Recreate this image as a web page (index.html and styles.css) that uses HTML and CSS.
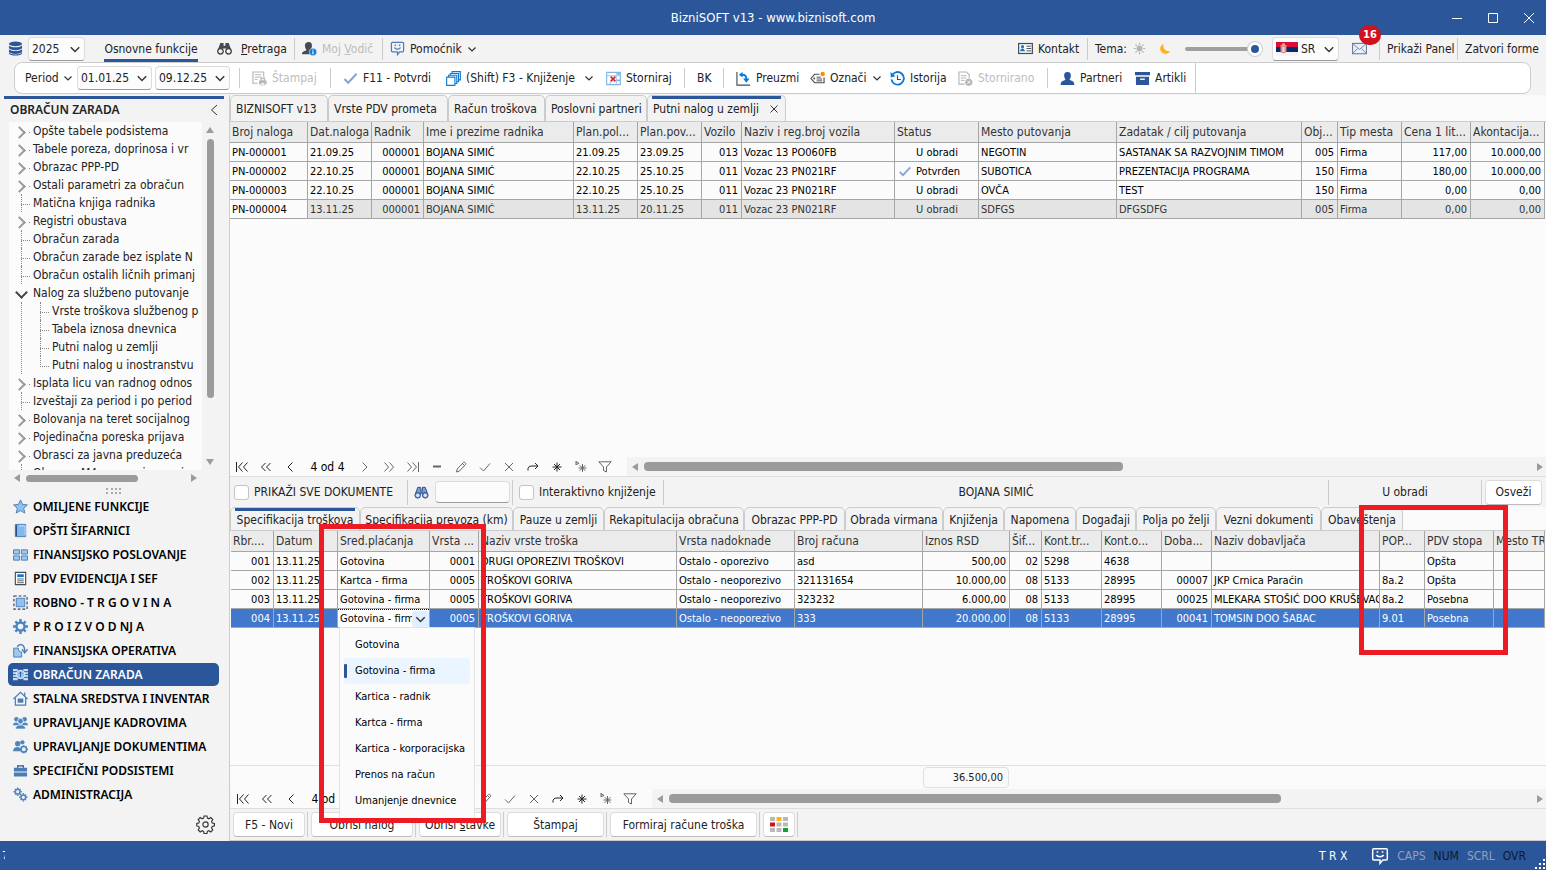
FILE: index.html
```html
<!DOCTYPE html>
<html lang="sr-Latn">
<head>
    <meta charset="UTF-8">
    <meta name="viewport" content="width=device-width, initial-scale=1.0">
    <title>BizniSOFT v13 - www.biznisoft.com</title>
    <link rel="stylesheet" href="styles.css">
</head>
<body>
    <!-- shared icons -->
    <svg class="icon-defs" aria-hidden="true">
        <symbol id="i-down" viewBox="0 0 10 10"><path d="M1.500 3.500L5 7l3.500-3.500" fill="none" stroke="#333" stroke-width="1.200"/></symbol>
        <symbol id="i-db" viewBox="0 0 16 16"><g fill="#2b579a"><ellipse cx="8" cy="3" rx="7" ry="2.500"/><path d="M1 4.500c1 3 13 3 14 0v3c-1 3-13 3-14 0z"/><path d="M1 8.500c1 3 13 3 14 0v3c-1 3-13 3-14 0z"/><path d="M1 12.300c1 2.700 13 2.700 14 0v1c-1 3-13 3-14 0z"/></g></symbol>
        <symbol id="i-binoc" viewBox="0 0 16 16"><g fill="#444b52"><path d="M3.500 2H7v3h2V2h3.500l1 3 2 5h-5.700V8H6.200v2H.5l2-5z"/><circle cx="3.700" cy="11" r="3.600"/><circle cx="12.300" cy="11" r="3.600"/></g><g fill="#f3f3f3"><circle cx="3.700" cy="11" r="2.100"/><circle cx="12.300" cy="11" r="2.100"/></g></symbol>
        <symbol id="i-binoc2" viewBox="0 0 16 16"><g fill="#7d9cd0" stroke="#2a4c86"><path d="M4 2.500h3l.5 4v3h-6zM9 2.500h3l2.500 7h-6v-3z"/><circle cx="4" cy="11" r="3"/><circle cx="12" cy="11" r="3"/></g><circle cx="4" cy="11" r="1.700" fill="#dbe7fa"/><circle cx="12" cy="11" r="1.700" fill="#dbe7fa"/></symbol>
        <symbol id="i-guide" viewBox="0 0 16 16"><path d="M7 1c3 0 4 2 3.500 5-.5 2-1 2.500-1 3.500L11 11v3H0c0-3 2-3 4.500-4V9C3 7.500 3 5 3.300 3.500 3.600 2 5 1 7 1z" fill="#444b52"/><circle cx="11.700" cy="11.700" r="4" fill="#0b7bd6" stroke="#f3f3f3" stroke-width=".6"/><path d="M11.700 11v3M11.700 9v1.200" stroke="#fff" stroke-width="1.300"/></symbol>
        <symbol id="i-smile" viewBox="0 0 16 16"><path d="M2.500 1.500h11q1 0 1 1v8q0 1-1 1h-3L8 14.500v-3H2.500q-1 0-1-1v-8q0-1 1-1z" fill="none" stroke="currentColor" stroke-width="1.300"/><path d="M5 4.500h1.500M9.500 4.500H11M4.800 7c1 2.300 5.400 2.300 6.400 0" fill="none" stroke="currentColor" stroke-width="1.400"/></symbol>
        <symbol id="i-contact" viewBox="0 0 16 16"><rect x=".7" y="2.700" width="14.600" height="10.600" fill="#fff" stroke="#444b52" stroke-width="1.300"/><circle cx="4.800" cy="6" r="1.700" fill="#0b7bd6"/><path d="M2.300 11c0-4 5-4 5 0z" fill="#0b7bd6"/><path d="M9 5.500h5M9 8h5M9 10.500h5" stroke="#444b52"/></symbol>
        <symbol id="i-sun" viewBox="0 0 16 16"><circle cx="8" cy="8" r="3.600" fill="#b4b4b4"/><path d="M8 1v2.500M8 12.500V15M1 8h2.500M12.500 8H15M3 3l1.800 1.800M11.200 11.200L13 13M13 3l-1.800 1.800M4.800 11.200L3 13" stroke="#b4b4b4" stroke-width="1.500"/></symbol>
        <symbol id="i-moon" viewBox="0 0 16 16"><path d="M7 2a6.500 6.500 0 1 0 8 9c-5 1.500-10-3-8-9z" fill="#ffb115"/></symbol>
        <symbol id="i-flag" viewBox="0 0 22 14"><path d="M0 0h22v5H0z" fill="#dc0c3c"/><path d="M0 5h22v5H0z" fill="#0c2a66"/><path d="M0 10h22v4H0z" fill="#f4f4f4"/><path d="M4.500 3h6v6c0 3-6 3-6 0z" fill="#d9888f"/><path d="M6 1.500h3V4H6z" fill="#e6b25a"/><path d="M6.500 5h2v5h-2z" fill="#f0d9d9"/></symbol>
        <symbol id="i-mail" viewBox="0 0 16 16"><rect x=".6" y="2.600" width="14.800" height="11" fill="#eaf0fa" stroke="#71829e" stroke-width="1.200"/><path d="M1 3l7 6 7-6M1 13l5-5M15 13l-5-5" fill="none" stroke="#71829e"/></symbol>
        <symbol id="i-print" viewBox="0 0 16 16"><path d="M12.500 6V1H1v12h5" fill="none" stroke="#b5b5b5" stroke-width="1.200"/><path d="M3 4h7M3 6.500h7M3 9h3" stroke="#b5b5b5"/><path d="M9 7h5v3h1.500v4H7.500v-4H9z" fill="#b5b5b5"/><path d="M10 8h3v2h-3zM9.500 12.500h4V15h-4z" fill="#fff" stroke="#b5b5b5" stroke-width=".7"/></symbol>
        <symbol id="i-check" viewBox="0 0 16 16"><path d="M1.500 8.500l4 4L14.500 3" fill="none" stroke="#86a3d6" stroke-width="2.200"/></symbol>
        <symbol id="i-stack" viewBox="0 0 16 16"><g fill="#fff" stroke="#0b7bd6" stroke-width="1.200"><path d="M6.500 .7h8.800v8.800H6.500z"/><path d="M4.600 2.600h8.800v8.800H4.600z"/><path d="M2.700 4.500h8.800v8.800H2.700z"/><path d="M.7 6.500h8.800v8.800H.7z"/></g></symbol>
        <symbol id="i-storno" viewBox="0 0 16 16"><path d="M.7 1.500h14.600v13H.7z" fill="#fff" stroke="#7db8e8" stroke-width="1.200"/><path d="M11 1h4.500v3H11zM11 9h4v2h-4z" fill="#7db8e8"/><path d="M1 5h14M4.500 11.500V15M11 5v10" stroke="#7db8e8" stroke-width=".8"/><path d="M5 6l5 5M10 6l-5 5" stroke="#dc2036" stroke-width="1.800"/></symbol>
        <symbol id="i-fetch" viewBox="0 0 16 16"><path d="M1 1v14h14" fill="none" stroke="#444b52" stroke-width="1.200"/><path d="M3 4l4-3v2c3 0 5 2 5 5h2.500L11 12.500 7.500 8H10c0-2-1-3-3-3v2z" fill="#0b7bd6"/></symbol>
        <symbol id="i-mark" viewBox="0 0 16 16"><path d="M10 3.500H5L1 8l4 4.500h10V7" fill="none" stroke="#444b52" stroke-width="1.200"/><circle cx="4.500" cy="8" r="1" fill="#444b52"/><path d="M7 6.500h4.500M7 8.500h6M7 10.500h6" stroke="#444b52"/><circle cx="13.500" cy="3.300" r="2.400" fill="#ff8c00"/></symbol>
        <symbol id="i-history" viewBox="0 0 16 16"><path d="M2 5A6.700 6.700 0 1 1 1.500 9" fill="none" stroke="#0b7bd6" stroke-width="2"/><path d="M.5 1l.3 6 5-1.500z" fill="#0b7bd6"/><path d="M8 4.500V9h3.500" fill="none" stroke="#444b52" stroke-width="1.200"/></symbol>
        <symbol id="i-doc-x" viewBox="0 0 16 16"><path d="M7 14H1V1h8l3 3v4" fill="none" stroke="#b5b5b5" stroke-width="1.200"/><path d="M3 5h6M3 7.500h6M3 10h4" stroke="#b5b5b5"/><circle cx="11.500" cy="12" r="3.800" fill="#b5b5b5"/><path d="M10 10.500l3 3M13 10.500l-3 3" stroke="#fff"/></symbol>
        <symbol id="i-user" viewBox="0 0 16 16"><path d="M8 1c3 0 4 2 3.500 5-.4 2-1.200 2-1.200 3.500 3 1 5 1.500 5 5.500H.7c0-4 2-4.500 5-5.500C5.700 8 4.900 8 4.500 6 4 3 5 1 8 1z" fill="#2b579a"/></symbol>
        <symbol id="i-box" viewBox="0 0 16 16"><path d="M0 1h16v3.500H0zM1 6h14v9H1z" fill="#2b579a"/><path d="M5.500 8h5v1.500h-5z" fill="#fff"/></symbol>
        <!-- record navigator -->
        <symbol id="n-first" viewBox="0 0 14 12"><path d="M1.500 1v10M7.500 1.500L3.500 6l4 4.500M12.500 1.500L8.500 6l4 4.500"/></symbol>
        <symbol id="n-pprev" viewBox="0 0 14 12"><path d="M6.500 2L2.500 6l4 4M11.500 2l-4 4 4 4"/></symbol>
        <symbol id="n-prev" viewBox="0 0 14 12"><path d="M9.500 1.500L5 6l4.500 4.500"/></symbol>
        <symbol id="n-next" viewBox="0 0 14 12"><path d="M4.500 1.500L9 6l-4.500 4.500"/></symbol>
        <symbol id="n-nnext" viewBox="0 0 14 12"><path d="M2.500 1.500L6.500 6l-4 4.500M7.500 1.500l4 4.500-4 4.500"/></symbol>
        <symbol id="n-last" viewBox="0 0 14 12"><path d="M1.500 1.500L5.500 6l-4 4.500M6.500 1.500l4 4.500-4 4.500M12.500 1v10"/></symbol>
        <symbol id="n-minus" viewBox="0 0 14 12"><path d="M3 5.500h8" stroke-width="2"/></symbol>
        <symbol id="n-plus" viewBox="0 0 14 12"><path d="M3 6h8M7 2v8"/></symbol>
        <symbol id="n-edit" viewBox="0 0 14 12"><path d="M2.500 11l.7-3L9.500 1.500c1-1 3 1 2 2L5.500 10zM8.500 2.500l2 2"/></symbol>
        <symbol id="n-ok" viewBox="0 0 14 12"><path d="M2 6.500L5.500 10 12 2.500"/></symbol>
        <symbol id="n-cancel" viewBox="0 0 14 12"><path d="M3 2l8 8M11 2l-8 8"/></symbol>
        <symbol id="n-redo" viewBox="0 0 14 12"><path d="M2 9.500c-.5-3 1-4.500 4-4.500h6M9 2l3 3-3 3"/></symbol>
        <symbol id="n-star" viewBox="0 0 14 12"><path d="M7 1.500v9M2.500 6h9M4 3l6 6M10 3L4 9"/></symbol>
        <symbol id="n-star2" viewBox="0 0 14 12"><path d="M8.500 3v8M4.500 7h8M5.700 4.200l5.600 5.600M11.300 4.200L5.700 9.800M2 0v4M2 .5l3 2-3 1"/></symbol>
        <symbol id="n-filter" viewBox="0 0 14 12"><path d="M.8.800h12.400L8.500 6v5l-3-1.500V6z"/></symbol>
        <!-- side navigation -->
        <symbol id="s-star" viewBox="0 0 16 16"><path d="M8 1l2.200 4.800 5.200.5-4 3.500 1.200 5.200L8 12.400 3.400 15l1.200-5.200-4-3.500 5.200-.5z" fill="#8ec1ee" stroke="#4a7db8"/></symbol>
        <symbol id="s-book" viewBox="0 0 16 16"><path d="M2.500 1.500h11v13h-11z" fill="#7fb9ee" stroke="#4a7db8"/><path d="M3.500 2v12" stroke="#2b4f80" stroke-width="1.500"/><path d="M6 3h7M13 3v10" stroke="#c7e0f7"/></symbol>
        <symbol id="s-grid" viewBox="0 0 16 16"><g fill="#9cc8f0" stroke="#4a7db8"><path d="M.5 3h6.500v4.500H.5zM9 3h6.500v4.500H9zM.5 9.500h6.500V14H.5zM9 9.500h6.500V14H9z"/></g></symbol>
        <symbol id="s-doc" viewBox="0 0 16 16"><path d="M2.500 1.500h11v13h-11z" fill="#fff" stroke="#444b52" stroke-width="1.200"/><path d="M4.500 3.500h7v3h-7z" fill="#0b7bd6"/><path d="M4.500 8.500h7M4.500 10.500h7M4.500 12.500h7" stroke="#444b52" stroke-width=".9"/></symbol>
        <symbol id="s-frame" viewBox="0 0 16 16"><path d="M3.500 3.500h9v9h-9z" fill="#8ec1ee" stroke="#4a7db8"/><path d="M1 1h14v14H1z" fill="none" stroke="#27405f" stroke-width="1.200" stroke-dasharray="3 2"/></symbol>
        <symbol id="s-cog" viewBox="0 0 16 16"><path d="M8 0v16M0 8h16M2.500 2.500l11 11M13.500 2.500l-11 11" stroke="#4c86c0" stroke-width="2.600"/><circle cx="8" cy="8" r="5.500" fill="#4c86c0"/><circle cx="8" cy="8" r="3" fill="#f3f3f3"/></symbol>
        <symbol id="s-flow" viewBox="0 0 16 16"><path d="M.7 5.500h5c0 3 1 4 3.500 4V15H.7z" fill="#9cc8f0" stroke="#4a7db8"/><path d="M4.500 4c3-4.500 8-2.500 8 5M9.500 6.500l3 4 3-4" fill="none" stroke="#4a7db8" stroke-width="1.500"/></symbol>
        <symbol id="s-pay" viewBox="0 0 16 16"><path d="M0 2h5v12H0zM11 2h5v12h-5z" fill="#c5dcf4"/><path d="M0 5h5M0 8h5M0 11h5M11 5h5M11 8h5M11 11h5" stroke="#2b579a"/><circle cx="8" cy="8" r="4.500" fill="#9cc8f0" stroke="#e8f1fb"/><path d="M8 5.500v5M6.500 7L8 5.500 9.500 7" stroke="#2b579a" fill="none"/></symbol>
        <symbol id="s-home" viewBox="0 0 16 16"><path d="M.5 8.500L8 1.500l7.500 7M2.500 7.500v7.500h11V7.500M12.500 5V1.500" fill="none" stroke="#4a7db8" stroke-width="1.300"/><path d="M5 8h6v4.500H5z" fill="#4a7db8"/></symbol>
        <symbol id="s-group" viewBox="0 0 16 16"><g fill="#4c86c0"><circle cx="3.700" cy="4.500" r="2.500"/><circle cx="12.300" cy="4.500" r="2.500"/><path d="M0 11c0-4 6-4 7 0zM9 11c1-4 7-4 7 0z"/></g><g fill="#4c86c0" stroke="#f3f3f3" stroke-width=".8"><circle cx="8" cy="6.500" r="3"/><path d="M2.500 15c0-6 11-6 11 0z"/></g></symbol>
        <symbol id="s-usercog" viewBox="0 0 16 16"><g fill="#4c86c0"><circle cx="5" cy="5" r="2.800"/><circle cx="10" cy="3.500" r="2.300"/><path d="M0 13c0-6 8-5 8-2v2z"/></g><circle cx="11.500" cy="11" r="3" fill="#f3f3f3" stroke="#4c86c0" stroke-width="1.800"/><path d="M11.500 6.500v2M11.500 13.500v2M7 11h2M14 11h2M8.500 8l1 1M13.500 13l1 1M14.500 8l-1 1M9.500 13l-1 1" stroke="#4c86c0" stroke-width="1.300"/></symbol>
        <symbol id="s-case" viewBox="0 0 16 16"><path d="M5 5V3h6v2" fill="none" stroke="#2b579a" stroke-width="1.400"/><path d="M1 5h14v4H1zM1 10h14v4.500H1z" fill="#4a7db8"/></symbol>
        <symbol id="s-cogs" viewBox="0 0 16 16"><g fill="none" stroke="#4c86c0"><circle cx="5" cy="5" r="2.500" stroke-width="1.600"/><circle cx="11" cy="11" r="2.500" stroke-width="1.600"/><path d="M5 .5v1.500M5 8v1.500M.5 5H2M8 5h1.500M2 2l1 1M7 7l1 1M8 2L7 3M3 7L2 8M11 6.500V8M11 14v1.500M6.500 11H8M14 11h1.500M8 8l1 1M13 13l1 1M14 8l-1 1M9 13l-1 1" stroke-width="1.500"/></g></symbol>
        <symbol id="s-settings" viewBox="0 0 20 20"><path d="M8.500 1h3l.5 2.300 1.600.7 2-1.300 2.100 2.100-1.300 2 .7 1.600 2.300.5v2.600l-2.300.6-.7 1.600 1.300 2-2.100 2.100-2-1.300-1.600.7-.5 2.300h-3L8 17.200l-1.600-.7-2 1.300-2.100-2.100 1.300-2-.7-1.600L.8 11.500V8.900l2.100-.5.7-1.600-1.300-2 2.100-2.100 2 1.300L8 3.300z" fill="none" stroke="#333" stroke-width="1.200"/><circle cx="10" cy="10" r="2.800" fill="none" stroke="#333" stroke-width="1.200"/></symbol>
    </svg>

    <header class="title-bar">
        <h1>BizniSOFT v13 - www.biznisoft.com</h1>
        <div class="window-buttons">
            <button aria-label="Minimize"><svg viewBox="0 0 12 12"><path d="M1 6.500h10"/></svg></button>
            <button aria-label="Maximize"><svg viewBox="0 0 12 12"><path d="M1.500 1.500h9v9h-9z"/></svg></button>
            <button aria-label="Close"><svg viewBox="0 0 12 12"><path d="M1 1l10 10M11 1L1 11"/></svg></button>
        </div>
    </header>

    <!-- menu row -->
    <nav class="menu-bar">
        <div class="menu-left">
            <svg class="icon"><use href="#i-db"/></svg>
            <span class="combo"><select aria-label="Godina"><option>2025</option></select><svg class="arrow"><use href="#i-down"/></svg></span>
            <button class="menu-tab"><span>Osnovne funkcije</span></button>
            <button class="wide-gap"><svg class="icon"><use href="#i-binoc"/></svg><span><u>P</u>retraga</span></button>
            <button class="split" disabled><svg class="icon"><use href="#i-guide"/></svg><span>Moj <u>V</u>odič</span></button>
            <button class="split"><svg class="icon blue"><use href="#i-smile"/></svg><span>Pomoćnik</span><svg class="arrow"><use href="#i-down"/></svg></button>
        </div>
        <div class="menu-right">
            <button><svg class="icon"><use href="#i-contact"/></svg><span>Kontakt</span></button>
            <label class="split theme" for="theme">Tema: <svg class="icon-sm"><use href="#i-sun"/></svg><svg class="icon-sm moon"><use href="#i-moon"/></svg></label>
            <input class="theme-range" id="theme" type="range" min="0" max="100" value="100">
            <span class="combo"><svg class="flag"><use href="#i-flag"/></svg><select aria-label="Jezik"><option>SR</option></select><svg class="arrow"><use href="#i-down"/></svg></span>
            <button class="mail" aria-label="Poruke"><svg class="icon"><use href="#i-mail"/></svg><span class="badge">16</span></button>
            <button class="split">Prikaži Panel</button>
            <button class="split">Zatvori forme</button>
        </div>
    </nav>

    <!-- main toolbar -->
    <div class="toolbar">
        <button class="period">Period<svg class="arrow"><use href="#i-down"/></svg></button>
        <span class="combo"><select aria-label="Od datuma"><option>01.01.25</option></select><svg class="arrow"><use href="#i-down"/></svg></span>
        <span class="combo"><select aria-label="Do datuma"><option>09.12.25</option></select><svg class="arrow"><use href="#i-down"/></svg></span>
        <button class="split" disabled><svg class="icon"><use href="#i-print"/></svg>Štampaj</button>
        <button class="split"><svg class="icon"><use href="#i-check"/></svg>F11 - Potvrdi</button>
        <button class="posting"><svg class="icon"><use href="#i-stack"/></svg>(Shift) F3 - Knjiženje<svg class="arrow"><use href="#i-down"/></svg></button>
        <button><svg class="icon"><use href="#i-storno"/></svg>Storniraj</button>
        <button class="split">BK</button>
        <button class="split"><svg class="icon"><use href="#i-fetch"/></svg>Preuzmi</button>
        <button><svg class="icon"><use href="#i-mark"/></svg>Označi<svg class="arrow"><use href="#i-down"/></svg></button>
        <button><svg class="icon"><use href="#i-history"/></svg>Istorija</button>
        <button disabled><svg class="icon"><use href="#i-doc-x"/></svg>Stornirano</button>
        <button class="split"><svg class="icon"><use href="#i-user"/></svg>Partneri</button>
        <button><svg class="icon"><use href="#i-box"/></svg>Artikli</button>
        <span class="toolbar-end"></span>
    </div>

    <div class="main">
        <aside class="sidebar">
            <div class="panel-title">
                <h2>OBRAČUN ZARADA</h2>
                <button aria-label="Sakrij"><svg viewBox="0 0 8 12"><path d="M7 1L1.500 6 7 11"/></svg></button>
            </div>
            <div class="tree-wrap">
                <ul class="tree">
                    <li class="closed">Opšte tabele podsistema</li>
                    <li class="closed">Tabele poreza, doprinosa i vr</li>
                    <li class="closed">Obrazac PPP-PD</li>
                    <li class="closed">Ostali parametri za obračun</li>
                    <li>Matična knjiga radnika</li>
                    <li class="closed">Registri obustava</li>
                    <li>Obračun zarada</li>
                    <li>Obračun zarade bez isplate N</li>
                    <li>Obračun ostalih ličnih primanj</li>
                    <li class="open">Nalog za službeno putovanje
                        <ul>
                            <li>Vrste troškova službenog p</li>
                            <li>Tabela iznosa dnevnica</li>
                            <li>Putni nalog u zemlji</li>
                            <li>Putni nalog u inostranstvu</li>
                        </ul>
                    </li>
                    <li class="closed">Isplata licu van radnog odnos</li>
                    <li>Izveštaji za period i po period</li>
                    <li class="closed">Bolovanja na teret socijalnog</li>
                    <li class="closed">Pojedinačna poreska prijava</li>
                    <li class="closed">Obrasci za javna preduzeća</li>
                    <li>Obrazac M4 za penziono osig</li>
                </ul>
                <div class="vscroll"><i class="tri up"></i><i class="thumb"></i><i class="tri down"></i></div>
            </div>
            <div class="hscroll tree-hscroll"><i class="tri left"></i><i class="thumb"></i><i class="tri right"></i></div>
            <div class="grip"></div>
            <nav class="side-nav">
                <a href="#"><svg class="icon"><use href="#s-star"/></svg>OMILJENE FUNKCIJE</a>
                <a href="#"><svg class="icon"><use href="#s-book"/></svg>OPŠTI ŠIFARNICI</a>
                <a href="#"><svg class="icon"><use href="#s-grid"/></svg>FINANSIJSKO POSLOVANJE</a>
                <a href="#"><svg class="icon"><use href="#s-doc"/></svg>PDV EVIDENCIJA I SEF</a>
                <a href="#"><svg class="icon"><use href="#s-frame"/></svg>ROBNO - T R G O V I N A</a>
                <a href="#"><svg class="icon"><use href="#s-cog"/></svg>P R O I Z V O D NJ A</a>
                <a href="#"><svg class="icon"><use href="#s-flow"/></svg>FINANSIJSKA OPERATIVA</a>
                <a href="#" class="active"><svg class="icon"><use href="#s-pay"/></svg>OBRAČUN ZARADA</a>
                <a href="#"><svg class="icon"><use href="#s-home"/></svg>STALNA SREDSTVA I INVENTAR</a>
                <a href="#"><svg class="icon"><use href="#s-group"/></svg>UPRAVLJANJE KADROVIMA</a>
                <a href="#"><svg class="icon"><use href="#s-usercog"/></svg>UPRAVLJANJE DOKUMENTIMA</a>
                <a href="#"><svg class="icon"><use href="#s-case"/></svg>SPECIFIČNI PODSISTEMI</a>
                <a href="#"><svg class="icon"><use href="#s-cogs"/></svg>ADMINISTRACIJA</a>
            </nav>
            <div class="side-footer"><button aria-label="Podešavanja"><svg><use href="#s-settings"/></svg></button></div>
        </aside>

        <div class="workspace">
            <!-- travel orders -->
            <section class="master">
                <div class="tabs form-tabs">
                    <button>BIZNISOFT v13</button>
                    <button>Vrste PDV prometa</button>
                    <button>Račun troškova</button>
                    <button>Poslovni partneri</button>
                    <button class="active">Putni nalog u zemlji<svg class="close" viewBox="0 0 10 10"><path d="M1.500 1.500l7 7M8.500 1.500l-7 7"/></svg></button>
                </div>
                <div class="grid-area">
                    <table class="data-grid orders">
                        <colgroup><col class="w78"><col class="w64"><col class="w52"><col class="w150"><col class="w64"><col class="w64"><col class="w40"><col class="w153"><col class="w84"><col class="w138"><col><col class="w36"><col class="w64"><col class="w69"><col class="w74"></colgroup>
                        <thead>
                            <tr><th>Broj naloga</th><th>Dat.naloga</th><th>Radnik</th><th>Ime i prezime radnika</th><th>Plan.pol...</th><th>Plan.pov...</th><th>Vozilo</th><th>Naziv i reg.broj vozila</th><th>Status</th><th>Mesto putovanja</th><th>Zadatak / cilj putovanja</th><th>Obj...</th><th>Tip mesta</th><th>Cena 1 lit...</th><th>Akontacija...</th></tr>
                        </thead>
                        <tbody>
                            <tr><td>PN-000001</td><td>21.09.25</td><td class="num">000001</td><td>BOJANA SIMIĆ</td><td>21.09.25</td><td>23.09.25</td><td class="num">013</td><td>Vozac 13 PO060FB</td><td class="status">U obradi</td><td>NEGOTIN</td><td>SASTANAK SA RAZVOJNIM TIMOM</td><td class="num">005</td><td>Firma</td><td class="num">117,00</td><td class="num">10.000,00</td></tr>
                            <tr><td>PN-000002</td><td>22.10.25</td><td class="num">000001</td><td>BOJANA SIMIĆ</td><td>22.10.25</td><td>25.10.25</td><td class="num">011</td><td>Vozac 23 PN021RF</td><td class="status done"><svg><use href="#i-check"/></svg>Potvrđen</td><td>SUBOTICA</td><td>PREZENTACIJA PROGRAMA</td><td class="num">150</td><td>Firma</td><td class="num">180,00</td><td class="num">10.000,00</td></tr>
                            <tr><td>PN-000003</td><td>22.10.25</td><td class="num">000001</td><td>BOJANA SIMIĆ</td><td>22.10.25</td><td>25.10.25</td><td class="num">011</td><td>Vozac 23 PN021RF</td><td class="status">U obradi</td><td>OVČA</td><td>TEST</td><td class="num">150</td><td>Firma</td><td class="num">0,00</td><td class="num">0,00</td></tr>
                            <tr class="current"><td>PN-000004</td><td>13.11.25</td><td class="num">000001</td><td>BOJANA SIMIĆ</td><td>13.11.25</td><td>20.11.25</td><td class="num">011</td><td>Vozac 23 PN021RF</td><td class="status">U obradi</td><td>SDFGS</td><td>DFGSDFG</td><td class="num">005</td><td>Firma</td><td class="num">0,00</td><td class="num">0,00</td></tr>
                        </tbody>
                    </table>
                </div>
                <div class="navigator">
                    <div class="nav-buttons">
                        <button aria-label="Prvi"><svg><use href="#n-first"/></svg></button>
                        <button aria-label="Strana nazad"><svg><use href="#n-pprev"/></svg></button>
                        <button aria-label="Prethodni"><svg><use href="#n-prev"/></svg></button>
                        <span class="position">4 od 4</span>
                        <button aria-label="Sledeći" class="dim"><svg><use href="#n-next"/></svg></button>
                        <button aria-label="Strana napred" class="dim"><svg><use href="#n-nnext"/></svg></button>
                        <button aria-label="Poslednji" class="dim"><svg><use href="#n-last"/></svg></button>
                        <button aria-label="Obriši" class="dim"><svg><use href="#n-minus"/></svg></button>
                        <button aria-label="Izmeni" class="dim"><svg><use href="#n-edit"/></svg></button>
                        <button aria-label="Potvrdi" class="dim"><svg><use href="#n-ok"/></svg></button>
                        <button aria-label="Odustani" class="dim"><svg><use href="#n-cancel"/></svg></button>
                        <button aria-label="Osveži"><svg><use href="#n-redo"/></svg></button>
                        <button aria-label="Obeleži"><svg><use href="#n-star"/></svg></button>
                        <button aria-label="Idi na obeleženo" class="dim"><svg><use href="#n-star2"/></svg></button>
                        <button aria-label="Filter" class="dim"><svg><use href="#n-filter"/></svg></button>
                    </div>
                    <div class="hscroll"><i class="tri left"></i><span class="track"><i class="thumb master-thumb"></i></span><i class="tri right"></i></div>
                </div>
            </section>

            <!-- order items -->
            <section class="detail">
                <div class="options">
                    <label><input type="checkbox">PRIKAŽI SVE DOKUMENTE</label>
                    <label class="split find"><svg class="icon"><use href="#i-binoc2"/></svg><input type="text" aria-label="Traži"></label>
                    <label class="split"><input type="checkbox">Interaktivno knjiženje</label>
                    <span class="split center">BOJANA SIMIĆ</span>
                    <span class="split center">U obradi</span>
                    <span class="split refresh"><button class="box-button">Osveži</button></span>
                </div>
                <div class="tabs spec-tabs">
                    <button class="active">Specifikacija troškova</button>
                    <button>Specifikacija prevoza (km)</button>
                    <button>Pauze u zemlji</button>
                    <button>Rekapitulacija obračuna</button>
                    <button>Obrazac PPP-PD</button>
                    <button>Obrada virmana</button>
                    <button>Knjiženja</button>
                    <button>Napomena</button>
                    <button>Događaji</button>
                    <button>Polja po želji</button>
                    <button>Vezni dokumenti</button>
                    <button>Obaveštenja</button>
                </div>
                <div class="grid-area">
                    <table class="data-grid costs">
                        <colgroup><col class="w43"><col class="w64"><col class="w92"><col class="w49"><col class="w198"><col class="w118"><col class="w128"><col class="w87"><col class="w32"><col class="w60"><col class="w60"><col class="w50"><col><col class="w45"><col class="w69"><col class="w51"></colgroup>
                        <thead>
                            <tr><th>Rbr....</th><th>Datum</th><th>Sred.plaćanja</th><th>Vrsta ...</th><th>Naziv vrste troška</th><th>Vrsta nadoknade</th><th>Broj računa</th><th>Iznos RSD</th><th>Šif...</th><th>Kont.tr...</th><th>Kont.o...</th><th>Doba...</th><th>Naziv dobavljača</th><th>POP...</th><th>PDV stopa</th><th>Mesto TR</th></tr>
                        </thead>
                        <tbody>
                            <tr><td class="num">001</td><td>13.11.25</td><td>Gotovina</td><td class="num">0001</td><td>DRUGI OPOREZIVI TROŠKOVI</td><td>Ostalo - oporezivo</td><td>asd</td><td class="num">500,00</td><td class="num">02</td><td>5298</td><td>4638</td><td></td><td></td><td></td><td>Opšta</td><td></td></tr>
                            <tr><td class="num">002</td><td>13.11.25</td><td>Kartca - firma</td><td class="num">0005</td><td>TROŠKOVI GORIVA</td><td>Ostalo - neoporezivo</td><td>321131654</td><td class="num">10.000,00</td><td class="num">08</td><td>5133</td><td>28995</td><td class="num">00007</td><td>JKP Crnica Paraćin</td><td>8a.2</td><td>Opšta</td><td></td></tr>
                            <tr><td class="num">003</td><td>13.11.25</td><td>Gotovina - firma</td><td class="num">0005</td><td>TROŠKOVI GORIVA</td><td>Ostalo - neoporezivo</td><td>323232</td><td class="num">6.000,00</td><td class="num">08</td><td>5133</td><td>28995</td><td class="num">00025</td><td>MLEKARA STOŠIĆ DOO KRUŠEVAC</td><td>8a.2</td><td>Posebna</td><td></td></tr>
                            <tr class="selected"><td class="num">004</td><td>13.11.25</td>
                                <td class="editing">
                                    <span class="cell-combo"><select aria-label="Sredstvo plaćanja"><option>Gotovina - firma</option></select><svg class="arrow"><use href="#i-down"/></svg></span>
                                    <ul class="dropdown" role="listbox">
                                        <li role="option">Gotovina</li>
                                        <li role="option" class="picked" aria-selected="true">Gotovina - firma</li>
                                        <li role="option">Kartica - radnik</li>
                                        <li role="option">Kartca - firma</li>
                                        <li role="option">Kartica - korporacijska</li>
                                        <li role="option">Prenos na račun</li>
                                        <li role="option">Umanjenje dnevnice</li>
                                    </ul>
                                </td>
                                <td class="num">0005</td><td>TROŠKOVI GORIVA</td><td>Ostalo - neoporezivo</td><td>333</td><td class="num">20.000,00</td><td class="num">08</td><td>5133</td><td>28995</td><td class="num">00041</td><td>TOMSIN DOO ŠABAC</td><td>9.01</td><td>Posebna</td><td></td></tr>
                        </tbody>
                    </table>
                </div>
                <div class="grid-footer"><output>36.500,00</output></div>
                <div class="navigator">
                    <div class="nav-buttons">
                        <button aria-label="Prvi"><svg><use href="#n-first"/></svg></button>
                        <button aria-label="Strana nazad"><svg><use href="#n-pprev"/></svg></button>
                        <button aria-label="Prethodni"><svg><use href="#n-prev"/></svg></button>
                        <span class="position">4 od 4</span>
                        <button aria-label="Sledeći" class="dim"><svg><use href="#n-next"/></svg></button>
                        <button aria-label="Strana napred" class="dim"><svg><use href="#n-nnext"/></svg></button>
                        <button aria-label="Poslednji" class="dim"><svg><use href="#n-last"/></svg></button>
                        <button aria-label="Dodaj" class="dim"><svg><use href="#n-plus"/></svg></button>
                        <button aria-label="Obriši" class="dim"><svg><use href="#n-minus"/></svg></button>
                        <button aria-label="Izmeni" class="dim"><svg><use href="#n-edit"/></svg></button>
                        <button aria-label="Potvrdi" class="dim"><svg><use href="#n-ok"/></svg></button>
                        <button aria-label="Odustani" class="dim"><svg><use href="#n-cancel"/></svg></button>
                        <button aria-label="Osveži"><svg><use href="#n-redo"/></svg></button>
                        <button aria-label="Obeleži"><svg><use href="#n-star"/></svg></button>
                        <button aria-label="Idi na obeleženo" class="dim"><svg><use href="#n-star2"/></svg></button>
                        <button aria-label="Filter" class="dim"><svg><use href="#n-filter"/></svg></button>
                    </div>
                    <div class="hscroll"><i class="tri left"></i><span class="track"><i class="thumb detail-thumb"></i></span><i class="tri right"></i></div>
                </div>
                <div class="actions">
                    <span><button class="box-button">F5 - Novi</button></span>
                    <span><button class="box-button">Obriši nalog</button></span>
                    <span><button class="box-button"><span>Obriši <u>s</u>tavke</span></button></span>
                    <span><button class="box-button">Štampaj</button></span>
                    <span><button class="box-button">Formiraj račune troška</button></span>
                    <span><button class="box-button" aria-label="Prikaz"><svg class="palette" viewBox="0 0 18 15"><g fill="#b9b9b9"><path d="M0 0h5v4H0zM13 0h5v4h-5zM6.500 5.500h5v4h-5zM13 5.500h5v4h-5zM0 11h5v4H0zM6.500 11h5v4h-5z"/></g><path d="M6.500 0h5v4h-5z" fill="#ffb115"/><path d="M0 5.500h5v4H0z" fill="#d0111b"/><path d="M13 11h5v4h-5z" fill="#13a12e"/></svg></button></span>
                </div>
                <!-- highlighted areas -->
                <div class="mark mark-payment"></div>
                <div class="mark mark-vat"></div>
            </section>
        </div>
    </div>

    <footer class="status-bar">
        <span class="status-left">7</span>
        <span class="trx">T R X</span>
        <svg class="status-smile"><use href="#i-smile"/></svg>
        <span class="off">CAPS</span>
        <span class="on">NUM</span>
        <span class="off">SCRL</span>
        <span class="on">OVR</span>
        <svg class="size-grip" viewBox="0 0 12 12"><path d="M9 1h2v2H9zM5 5h2v2H5zM9 5h2v2H9zM1 9h2v2H1zM5 9h2v2H5zM9 9h2v2H9z" fill="#fff"/></svg>
    </footer>
</body>
</html>
```

FILE: styles.css
```css
* {
    box-sizing: border-box;
}

body {
    display: flex;
    flex-direction: column;
    height: 100vh;
    margin: 0;
    overflow: hidden;
    font-family: "DejaVu Sans Condensed", "DejaVu Sans", sans-serif;
    font-size: 12px;
    color: #222;
    background-color: #f3f3f3;
}

button, select, input {
    font: inherit;
    color: inherit;
}

button {
    display: flex;
    align-items: center;
    gap: 5px;
    margin: 0;
    padding: 0 4px;
    border: none;
    background: none;
    white-space: nowrap;
}

button:disabled {
    color: #bdbdbd;
}

select {
    flex: 1;
    min-width: 0;
    padding: 0;
    border: none;
    background: none;
    appearance: none;
    outline: none;
}

ul {
    margin: 0;
    padding: 0;
    list-style: none;
}

.icon-defs {
    position: absolute;
    width: 0;
    height: 0;
}

.icon {
    flex: none;
    width: 15px;
    height: 15px;
}

.icon-sm {
    width: 13px;
    height: 13px;
}

.arrow {
    flex: none;
    width: 10px;
    height: 10px;
}

.combo .arrow {
    width: 12px;
    height: 12px;
}

.blue {
    color: #4a7ec0;
}

/* title bar */
.title-bar {
    position: relative;
    display: flex;
    flex: 0 0 35px;
    align-items: center;
    justify-content: center;
    background-color: #2b579a;
    color: #fff;
}

.title-bar h1 {
    margin: 0;
    font-size: 13px;
    font-weight: normal;
}

.window-buttons {
    position: absolute;
    right: 7px;
    display: flex;
    gap: 16px;
}

.window-buttons svg {
    width: 12px;
    height: 12px;
    fill: none;
    stroke: #fff;
    stroke-width: 1;
}

/* menu row */
.menu-bar {
    display: flex;
    flex: 0 0 27px;
    justify-content: space-between;
}

.menu-left, .menu-right {
    display: grid;
    align-items: center;
}

.menu-left {
    grid-template-columns: 20px 57px 132px 77px 88px 104px;
    padding-left: 8px;
}

.menu-right {
    grid-template-columns: 73px 92px 93px 67px 40px 78px 89px;
}

.menu-bar button {
    height: 22px;
}

.combo {
    display: flex;
    align-items: center;
    height: 24px;
    padding: 0 3px;
    border: 1px solid #dcdcdc;
    border-bottom-color: #9a9a9a;
    border-radius: 4px;
    background-color: #fcfcfc;
}

.menu-bar .menu-tab {
    justify-content: center;
    align-self: stretch;
    height: 27px;
}

.menu-tab span {
    padding: 6px 0 3px;
    border-bottom: 3px solid #2b579a;
}

.menu-left .wide-gap {
    gap: 9px;
    padding: 0;
}

.menu-bar .split {
    padding-left: 7px;
    border-left: 1px solid #ccc;
}

.theme {
    display: flex;
    align-items: center;
    gap: 6px;
    height: 22px;
}

.moon {
    margin-left: 6px;
}

.theme-range {
    width: 77px;
    height: 15px;
    margin: 0 6px;
    appearance: none;
    background: none;
}

.theme-range::-webkit-slider-runnable-track {
    height: 4px;
    border-radius: 2px;
    background-color: #a0a0a0;
}

.theme-range::-webkit-slider-thumb {
    width: 14px;
    height: 14px;
    margin-top: -5px;
    border: 3px solid #fff;
    border-radius: 50%;
    background-color: #2b579a;
    box-shadow: 0 0 0 1px #d0d0d0;
    appearance: none;
}

.flag {
    flex: none;
    width: 22px;
    height: 14px;
    margin-right: 3px;
}

.mail {
    position: relative;
    justify-content: center;
}

.badge {
    position: absolute;
    top: -13px;
    left: 20px;
    width: 22px;
    height: 20px;
    border-radius: 10px;
    background-color: #d0111f;
    color: #fff;
    font-size: 11px;
    font-weight: bold;
    line-height: 20px;
    text-align: center;
}

/* toolbar */
.toolbar {
    display: grid;
    grid-template-columns: 62px 78px 84px 91px 110px 162px 82px 39px 83px 80px 68px 93px 84px 64px 1fr;
    flex: 0 0 32px;
    align-items: center;
    margin: 0 15px 0 14px;
    border: 1px solid #ccc;
    border-radius: 8px;
    background-color: #fff;
}

.toolbar button {
    height: 20px;
}

.toolbar .period {
    gap: 4px;
    padding-left: 10px;
}

.toolbar .combo {
    width: 75px;
}

.toolbar .posting {
    padding-left: 6px;
}

.posting .arrow {
    margin-left: 4px;
}

.toolbar .split {
    padding-left: 12px;
    border-left: 1px solid #ccc;
}

.toolbar-end {
    align-self: stretch;
    border-left: 1px solid #ccc;
}

/* body layout */
.main {
    display: flex;
    flex: 1;
    min-height: 0;
    padding-top: 1px;
}

.sidebar {
    display: flex;
    flex: 0 0 229px;
    flex-direction: column;
    min-height: 0;
}

.panel-title {
    display: flex;
    flex: none;
    align-items: center;
    justify-content: space-between;
    height: 26px;
    margin: 1px 5px 0 4px;
    padding: 0 2px 2px 6px;
    border-top: 3px solid #2b579a;
}

.panel-title h2 {
    margin: 0;
    font-family: "Noto Sans", sans-serif;
    font-size: 12px;
    font-weight: 600;
}

.panel-title svg {
    width: 8px;
    height: 12px;
    fill: none;
    stroke: #333;
}

.tree-wrap {
    display: flex;
    flex: 1;
    min-height: 0;
    padding-left: 9px;
}

.tree {
    width: 193px;
    overflow: hidden;
    background-color: #fbfbfb;
    line-height: 18px;
}

.tree li {
    position: relative;
    padding-left: 24px;
    white-space: nowrap;
}

.tree ul {
    margin-left: -5px;
}

/* dotted guides */
.tree li::before {
    content: "";
    position: absolute;
    top: 0;
    left: 12px;
    width: 9px;
    height: 10px;
    border-bottom: 1px dotted #888;
}

.tree li::after {
    content: "";
    position: absolute;
    top: 0;
    bottom: 0;
    left: 12px;
    border-left: 1px dotted #888;
}

.tree ul li:last-child::after {
    bottom: 9px;
}

.tree .closed::after, .tree .open::before {
    top: 6px;
    bottom: auto;
    left: 6px;
    width: 7px;
    height: 7px;
    border: solid #999;
    border-width: 2px 2px 0 0;
    transform: rotate(45deg);
}

.tree .open::before {
    top: 4px;
    left: 8px;
    border-color: #444;
    transform: rotate(135deg);
}

.tree .open::after {
    top: 18px;
}

.tree .closed::before {
    left: 20px;
    width: 1px;
}

.vscroll {
    display: flex;
    flex-direction: column;
    align-items: center;
    width: 16px;
    padding: 5px 0;
}

.vscroll .thumb {
    width: 7px;
    height: 259px;
    margin: 6px 0 auto;
}

.thumb {
    display: block;
    border-radius: 4px;
    background-color: #9b9b9b;
}

.tri {
    flex: none;
    border: 4px solid transparent;
}

.tri.up {
    border-top: none;
    border-bottom: 6px solid #9b9b9b;
}

.tri.down {
    border-bottom: none;
    border-top: 6px solid #9b9b9b;
}

.tri.left {
    border-left: none;
    border-right: 6px solid #9b9b9b;
}

.tri.right {
    border-right: none;
    border-left: 6px solid #9b9b9b;
}

.hscroll {
    display: flex;
    flex: 1;
    align-items: center;
}

.tree-hscroll {
    flex: none;
    height: 16px;
    padding: 0 32px 0 14px;
}

.tree-hscroll .thumb {
    width: 112px;
    height: 7px;
    margin: 0 auto 0 6px;
}

.grip {
    flex: none;
    width: 15px;
    height: 6px;
    margin: 2px auto 1px 106px;
    border-top: 2px dotted #aaa;
    border-bottom: 2px dotted #aaa;
}

.side-nav {
    flex: none;
    padding: 0 10px 0 8px;
    font-family: "Noto Sans", sans-serif;
    font-weight: 600;
}

.side-nav a {
    display: flex;
    align-items: center;
    gap: 5px;
    height: 23px;
    margin-bottom: 1px;
    padding-left: 5px;
    border-radius: 5px;
    color: #000;
    text-decoration: none;
    white-space: nowrap;
}

.side-nav .active {
    background-color: #2b579a;
    color: #fff;
}

.side-footer {
    display: flex;
    flex: none;
    justify-content: flex-end;
    height: 34px;
    padding-right: 10px;
}

.side-footer svg {
    width: 19px;
    height: 19px;
}

.workspace {
    display: flex;
    flex: 1;
    flex-direction: column;
    min-width: 0;
    border-left: 1px solid #ccc;
}

.master {
    display: flex;
    flex: 1;
    flex-direction: column;
    min-height: 0;
}

.detail {
    position: relative;
    display: flex;
    flex: 0 0 364px;
    flex-direction: column;
}

/* tabs */
.tabs {
    display: grid;
    flex: none;
    border-bottom: 1px solid #ccc;
    background-color: #fafafa;
}

.form-tabs {
    grid-template-columns: 98px 120px 97px 102px 139px;
    height: 27px;
}

.spec-tabs {
    grid-template-columns: 130px 153px 91px 140px 101px 98px 61px 72px 60px 80px 105px 82px;
    height: 24px;
}

.tabs button {
    padding: 1px 5px 0;
    border: 1px solid #ccc;
    border-bottom: none;
    border-radius: 5px 5px 0 0;
    background-color: #f3f3f3;
}

.spec-tabs button {
    justify-content: center;
    padding: 2px 0 0;
}

.tabs .active {
    position: relative;
}

.tabs .active::before {
    content: "";
    position: absolute;
    top: 0;
    left: 4px;
    right: 4px;
    height: 3px;
    background-color: #2b579a;
}

.close {
    width: 10px;
    height: 10px;
    margin-left: 5px;
    fill: none;
    stroke: #333;
}

/* grids */
.grid-area {
    flex: 1;
    min-height: 0;
    padding-right: 1px;
    background-color: #fbfbfb;
}

.data-grid {
    width: 100%;
    border-collapse: separate;
    border-spacing: 0;
    table-layout: fixed;
    font-size: 11px;
    color: #000;
}

.costs {
    width: calc(100% - 1px);
    margin-left: 1px;
}

.data-grid th, .data-grid td {
    height: 19px;
    padding: 0 3px 0 2px;
    border: solid #a6a6a6;
    border-width: 0 1px 1px 0;
    overflow: hidden;
    text-align: left;
    white-space: nowrap;
}

.data-grid th {
    height: 21px;
    padding-right: 0;
    background-color: #ebebeb;
    color: #333;
    font-size: 12px;
    font-weight: normal;
}

.data-grid .num {
    text-align: right;
}

.data-grid .status {
    padding-left: 21px;
}

.data-grid .done {
    padding-left: 3px;
}

.done svg {
    width: 14px;
    height: 13px;
    margin-right: 4px;
    vertical-align: top;
}

.current td:not(:first-child) {
    background-color: #e4e4e4;
    color: #333;
}

.selected td {
    background-color: #4178cb;
    color: #fff;
}

.w32 { width: 32px; }
.w36 { width: 36px; }
.w40 { width: 40px; }
.w43 { width: 43px; }
.w45 { width: 45px; }
.w49 { width: 49px; }
.w50 { width: 50px; }
.w51 { width: 51px; }
.w52 { width: 52px; }
.w60 { width: 60px; }
.w64 { width: 64px; }
.w69 { width: 69px; }
.w74 { width: 74px; }
.w78 { width: 78px; }
.w84 { width: 84px; }
.w87 { width: 87px; }
.w92 { width: 92px; }
.w118 { width: 118px; }
.w128 { width: 128px; }
.w138 { width: 138px; }
.w150 { width: 150px; }
.w153 { width: 153px; }
.w198 { width: 198px; }

/* opened cell editor */
.data-grid .editing {
    position: relative;
    padding: 0;
    background-color: #fff;
    color: #000;
    overflow: visible;
}

.cell-combo {
    display: flex;
    align-items: center;
    height: 18px;
    padding-left: 2px;
    border-top: 1px dotted #000;
}

.cell-combo .arrow {
    width: 17px;
    height: 16px;
    padding: 2px;
    border-radius: 3px;
    background-color: #dfefff;
}

.dropdown {
    position: absolute;
    z-index: 2;
    top: 18px;
    left: 1px;
    width: 136px;
    height: 192px;
    padding: 4px;
    border: 1px solid #e2e2e2;
    background-color: #fbfbfb;
    line-height: 26px;
}

.dropdown li {
    padding-left: 11px;
    border-radius: 4px;
}

.dropdown .picked {
    position: relative;
    background-color: #eaf5ff;
}

.picked::before {
    content: "";
    position: absolute;
    top: 6px;
    left: 0;
    width: 3px;
    height: 14px;
    border-radius: 1px;
    background-color: #2b579a;
}

.grid-footer {
    flex: 0 0 24px;
    padding: 1px 0 1px 693px;
    border-top: 1px solid #e0e0e0;
    background-color: #fafafa;
}

.grid-footer output {
    display: block;
    width: 86px;
    height: 21px;
    padding-right: 5px;
    border: 1px solid #e0e0e0;
    border-radius: 4px;
    font-size: 11px;
    line-height: 20px;
    text-align: right;
}

/* record navigator */
.navigator {
    display: flex;
    flex: 0 0 20px;
    border-bottom: 1px solid #dedede;
}

.detail .navigator {
    padding-left: 1px;
}

.nav-buttons {
    display: flex;
    align-items: center;
    padding-right: 10px;
    background-color: #fbfbfb;
}

.nav-buttons button {
    width: 24px;
    padding: 0;
    justify-content: center;
}

.nav-buttons svg {
    width: 14px;
    height: 12px;
    fill: none;
    stroke: #222;
    stroke-width: 1;
}

.nav-buttons .dim svg {
    stroke: #666;
}

.position {
    width: 51px;
    color: #000;
    text-align: center;
}

.navigator .hscroll {
    padding: 0 3px 0 5px;
}

.track {
    flex: 1;
    margin: 0 6px;
}

.track .thumb {
    height: 9px;
}

.master-thumb {
    width: 54%;
}

.detail-thumb {
    width: 71%;
}

/* options above the item tabs */
.options {
    display: grid;
    grid-template-columns: 177px 105px 151px 1fr 153px 65px;
    flex: 0 0 30px;
    align-items: center;
}

.options > * {
    display: flex;
    align-items: center;
    height: 25px;
    padding-left: 4px;
    white-space: nowrap;
}

.options .split {
    padding-left: 6px;
    border-left: 1px solid #ccc;
}

.options .center {
    justify-content: center;
    padding: 0;
}

.options .refresh {
    padding: 0 4px 0 3px;
}

.options input[type="checkbox"] {
    width: 15px;
    height: 15px;
    margin: 0 5px 0 0;
    border: 1px solid #c4c4c4;
    border-radius: 3px;
    background-color: #fff;
    appearance: none;
}

.find input {
    width: 75px;
    height: 22px;
    margin-left: 6px;
    border: 1px solid #dcdcdc;
    border-bottom-color: #9a9a9a;
    border-radius: 4px;
    background-color: #fcfcfc;
}

.box-button {
    justify-content: center;
    width: 100%;
    height: 25px;
    border: 1px solid #dcdcdc;
    border-bottom-color: #bbb;
    border-radius: 4px;
    background-color: #fff;
}

/* bottom actions */
.actions {
    display: grid;
    grid-template-columns: 78px 108px 88px 103px 153px 38px;
    flex: 0 0 32px;
    align-items: center;
    border-bottom: 1px solid #ccc;
}

.actions > span {
    padding: 0 2px 0 3px;
    border-right: 1px solid #ccc;
}

.palette {
    flex: none;
    width: 18px;
    height: 15px;
}

.mark {
    position: absolute;
    z-index: 5;
    border: 5px solid #ed1c24;
    pointer-events: none;
}

.mark-payment {
    top: 47px;
    left: 89px;
    width: 167px;
    height: 299px;
}

.mark-vat {
    top: 28px;
    right: 38px;
    width: 149px;
    height: 150px;
}

/* status bar */
.status-bar {
    display: flex;
    flex: 0 0 29px;
    align-items: center;
    gap: 8px;
    padding-left: 2px;
    background-color: #2b579a;
    color: #fff;
}

.status-left {
    width: 3px;
    margin-right: auto;
    overflow: hidden;
    font-size: 11px;
}

.trx {
    margin-right: 16px;
}

.status-smile {
    width: 18px;
    height: 18px;
}

.off {
    color: #93a0b8;
}

.on {
    color: #10182a;
}

.size-grip {
    align-self: flex-end;
    width: 12px;
    height: 12px;
}
```
